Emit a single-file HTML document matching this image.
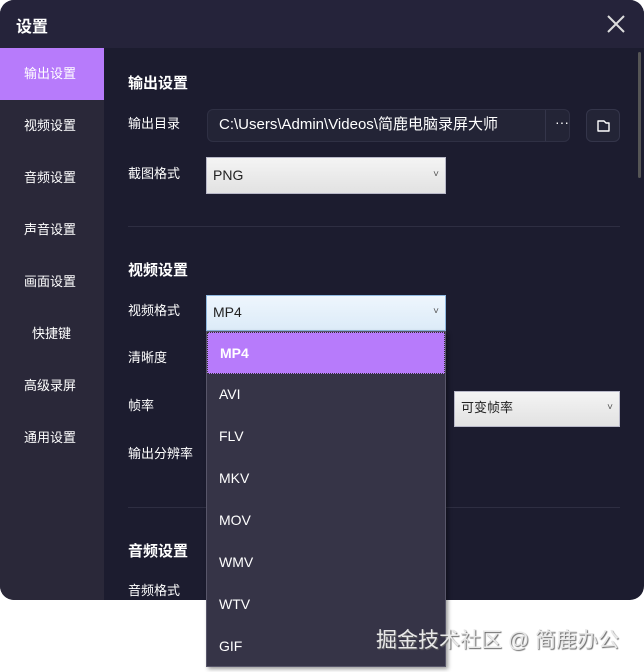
<!DOCTYPE html>
<html><head><meta charset="utf-8"><style>
*{margin:0;padding:0;box-sizing:border-box}
body{width:644px;height:672px;background:#fff;position:relative;overflow:hidden;font-family:"Liberation Sans","Noto Sans CJK SC",sans-serif;}
.win{position:absolute;left:0;top:0;width:644px;height:600px;background:#1c1c2f;border-radius:14px;overflow:hidden}
.title{position:absolute;left:0;top:0;width:644px;height:48px;background:#25233a;color:#fff;font-size:16px;font-weight:bold}
.title span{position:absolute;left:16px;top:13px}
.side{position:absolute;left:0;top:48px;width:104px;height:552px;background:#2a2839}
.side div{height:52px;line-height:52px;color:#fff;font-size:13px;padding-left:24px}
.side .act{background:#b77bfb}
.a{position:absolute;color:#fff;font-size:13px}
.h{position:absolute;color:#fff;font-size:15px;font-weight:bold;left:128px}
.sel{position:absolute;background:linear-gradient(#f4f4f4,#e2e2e2);border:1px solid #b8b8c8;color:#222;font-size:14px;padding-left:6px}
.sel:after{content:"˅";position:absolute;right:6px;top:0;font-size:10px;color:#555}
.hr{position:absolute;left:128px;width:492px;height:1px;background:#2e2e42}
.dd{position:absolute;left:206px;top:331px;width:240px;height:336px;background:#363447;border:1px solid #58566a;box-shadow:2px 2px 4px rgba(0,0,0,.4)}
.dd div{height:42px;line-height:40px;color:#fff;font-size:14px;padding-left:12px}
.dd .on{background:#b77bfb;font-weight:bold;border:1px dotted #333;height:42px}
</style></head><body>
<div class="win">
<div class="title"><span>设置</span>
<svg style="position:absolute;left:607px;top:15px" width="18" height="18"><path d="M1 1L17 17M17 1L1 17" stroke="#ddd" stroke-width="2"/></svg></div>
<div class="side"><div class="act">输出设置</div><div>视频设置</div><div>音频设置</div><div>声音设置</div><div>画面设置</div><div style="padding-left:32px">快捷键</div><div>高级录屏</div><div>通用设置</div></div>
<div style="position:absolute;left:638px;top:52px;width:3px;height:126px;background:#555;border-radius:2px"></div>
<div class="h" style="top:72px">输出设置</div>
<div class="a" style="left:128px;top:113px">输出目录</div>
<div style="position:absolute;left:207px;top:109px;width:363px;height:33px;background:#232436;border:1px solid #2f3044;border-radius:6px;color:#fff;font-size:15px;line-height:29px;padding-left:11px">C:\Users\Admin\Videos\简鹿电脑录屏大师
<div style="position:absolute;left:337px;top:0;width:1px;height:31px;background:#34354a"></div>
<span style="position:absolute;left:347px;top:-2px;font-size:14px">···</span></div>
<div style="position:absolute;left:586px;top:109px;width:34px;height:33px;background:#232436;border:1px solid #34354a;border-radius:6px">
<svg style="position:absolute;left:9px;top:8px" width="15" height="15"><path d="M2 3h6l2 2h3v8H2z" fill="none" stroke="#fff" stroke-width="1.4" stroke-linejoin="round"/></svg></div>
<div class="a" style="left:128px;top:163px">截图格式</div>
<div class="sel" style="left:206px;top:157px;width:240px;height:37px;line-height:34px">PNG</div>
<div class="hr" style="top:226px"></div>
<div class="h" style="top:259px">视频设置</div>
<div class="a" style="left:128px;top:300px">视频格式</div>
<div class="sel" style="left:206px;top:295px;width:240px;height:36px;line-height:32px;background:linear-gradient(#eef6fd,#dcebf8);border-color:#8fb8e0">MP4</div>
<div class="a" style="left:128px;top:347px">清晰度</div>
<div class="a" style="left:128px;top:395px">帧率</div>
<div class="sel" style="left:454px;top:391px;width:166px;height:36px;line-height:32px;font-size:13px">可变帧率</div>
<div class="a" style="left:128px;top:443px">输出分辨率</div>
<div class="hr" style="top:507px"></div>
<div class="h" style="top:540px">音频设置</div>
<div class="a" style="left:128px;top:580px">音频格式</div>
</div>
<div class="dd"><div class="on">MP4</div><div>AVI</div><div>FLV</div><div>MKV</div><div>MOV</div><div>WMV</div><div>WTV</div><div>GIF</div></div>
<div style="position:absolute;left:376px;top:624px;color:#e8e8e8;font-size:21px;text-shadow:1px 1px 1px #666">掘金技术社区 @ 简鹿办公</div>
</body></html>
